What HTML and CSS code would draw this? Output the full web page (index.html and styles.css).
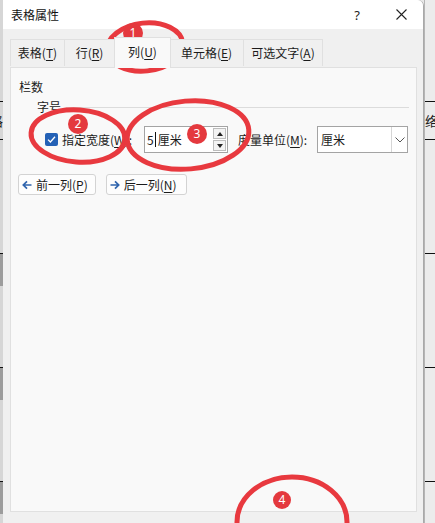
FILE: index.html
```html
<!DOCTYPE html>
<html lang="zh-CN">
<head>
<meta charset="utf-8">
<title>表格属性</title>
<link rel="stylesheet" href="styles.css">
</head>
<body>
<div class="screen">
  <div class="doc doc-left">
    <div class="doc-line l1"></div>
    <div class="doc-cell">格</div>
    <div class="doc-line"></div>
    <div class="doc-gap1"></div>
    <div class="doc-line"></div>
    <div class="doc-shade"></div>
    <div class="doc-gap2"></div>
    <div class="doc-line"></div>
    <div class="doc-shade"></div>
    <div class="doc-gap2"></div>
    <div class="doc-line"></div>
    <div class="doc-shade"></div>
  </div>

  <div class="dialog">
    <div class="titlebar">
      <span class="title">表格属性</span>
      <span class="tb-btn help">?</span>
      <span class="tb-btn close">
        <svg width="11" height="11" viewBox="0 0 11 11"><path d="M0.5 0.5L10.5 10.5M10.5 0.5L0.5 10.5" stroke="#222" stroke-width="1.1" fill="none"/></svg>
      </span>
    </div>

    <div class="tabs">
      <div class="tab t1">表格(<u>T</u>)</div>
      <div class="tab t2">行(<u>R</u>)</div>
      <div class="tab t3 active">列(<u>U</u>)</div>
      <div class="tab t4">单元格(<u>E</u>)</div>
      <div class="tab t5">可选文字(<u>A</u>)</div>
    </div>

    <div class="panel">
      <div class="group-title">栏数</div>
      <div class="subgroup">
        <span class="sub-label">字号</span>
        <span class="sep"></span>
      </div>
      <div class="row">
        <span class="checkbox">
          <svg width="9" height="9" viewBox="0 0 9 9"><path d="M1 4.6L3.4 7L8 1.8" stroke="#fff" stroke-width="1.3" fill="none"/></svg>
        </span>
        <span class="check-label">指定宽度(<u>W</u>):</span>
        <span class="spin-input">
          <span class="value">5<span class="caret"></span>厘米</span>
          <span class="spinner">
            <span class="spin-btn"><svg width="6" height="4" viewBox="0 0 6 4"><path d="M0 4L3 0L6 4Z" fill="#222"/></svg></span>
            <span class="spin-btn"><svg width="6" height="4" viewBox="0 0 6 4"><path d="M0 0L3 4L6 0Z" fill="#222"/></svg></span>
          </span>
        </span>
        <span class="unit-label">度量单位(<u>M</u>):</span>
        <span class="select">
          <span class="select-value">厘米</span>
          <span class="select-arrow">
            <svg width="10" height="6" viewBox="0 0 10 6"><path d="M0.5 0.5L5 5L9.5 0.5" stroke="#555" stroke-width="1" fill="none"/></svg>
          </span>
        </span>
      </div>
      <div class="nav-row">
        <button class="nav-btn">
          <svg width="10" height="10" viewBox="0 0 10 10"><path d="M9.5 5H1.5M5 1.3L1.3 5L5 8.7" stroke="#2f64ad" stroke-width="1.7" fill="none"/></svg>
          <span>前一列(<u>P</u>)</span>
        </button>
        <button class="nav-btn">
          <svg width="10" height="10" viewBox="0 0 10 10"><path d="M0.5 5H8.5M5 1.3L8.7 5L5 8.7" stroke="#2f64ad" stroke-width="1.7" fill="none"/></svg>
          <span>后一列(<u>N</u>)</span>
        </button>
      </div>
    </div>
  </div>

  <div class="doc doc-right">
    <div class="doc-line l1"></div>
    <div class="doc-cell">络</div>
    <div class="doc-line"></div>
    <div class="doc-gap1"></div>
    <div class="doc-line"></div>
    <div class="doc-gap3"></div>
    <div class="doc-line"></div>
    <div class="doc-gap3"></div>
    <div class="doc-line"></div>
  </div>

  <svg class="marks" width="435" height="523" viewBox="0 0 435 523">
    <g fill="none" stroke="#e8393f" stroke-width="5">
      <ellipse cx="145" cy="47" rx="38" ry="24" transform="rotate(-6 145 47)"/>
      <ellipse cx="78" cy="136" rx="47" ry="26" transform="rotate(4 78 136)"/>
      <ellipse cx="188" cy="135" rx="61" ry="34" transform="rotate(-5 188 135)"/>
      <ellipse cx="292" cy="522" rx="55" ry="45"/>
    </g>
  </svg>
  <span class="badge b1">1</span>
  <span class="badge b2">2</span>
  <span class="badge b3">3</span>
  <span class="badge b4">4</span>
</div>
</body>
</html>
```

FILE: styles.css
```css
* { box-sizing: border-box; }

html, body {
  margin: 0;
  padding: 0;
  background: #e9e9e9;
}

body {
  font-family: "Noto Sans CJK SC", "Noto Sans", sans-serif;
  font-size: 12px;
  color: #1b1b1b;
}

.screen {
  position: relative;
  width: 435px;
  height: 523px;
  overflow: hidden;
  display: flex;
}

/* document behind the dialog */
.doc {
  display: flex;
  flex-direction: column;
  overflow: hidden;
  background: #ececec;
  flex: none;
}

.doc-left {
  width: 3px;
  background: #d6d6d6;
}

.doc-right {
  width: 12px;
  border-left: 1px solid #b5b5b5;
}

.doc-line {
  height: 1px;
  background: #111;
  flex: none;
}

.doc-line.l1 { margin-top: 101px; }

.doc-cell {
  height: 37px;
  line-height: 37px;
  font-size: 13px;
  white-space: nowrap;
  flex: none;
}

.doc-left .doc-cell { margin-left: -10px; }

.doc-gap1 { height: 113px; flex: none; }
.doc-gap2 { height: 81px; flex: none; }
.doc-gap3 { height: 113px; flex: none; }

.doc-shade {
  height: 32px;
  background: #9c9c9c;
  flex: none;
}

/* dialog */
.dialog {
  width: 421px;
  flex: none;
  background: #f0f0f0;
  border-right: 1px solid #a9a9a9;
  border-top-right-radius: 6px;
  display: flex;
  flex-direction: column;
}

.titlebar {
  height: 29px;
  background: #ffffff;
  display: flex;
  align-items: center;
  border-top-right-radius: 6px;
}

.title {
  flex: 1;
  padding-left: 8px;
  font-size: 12px;
  color: #111;
}

.tb-btn {
  width: 44px;
  height: 29px;
  display: flex;
  align-items: center;
  justify-content: center;
}

.help {
  font-family: "Noto Sans", sans-serif;
  font-size: 13px;
  color: #222;
}

/* tabs */
.tabs {
  display: flex;
  align-items: flex-end;
  height: 38px;
  padding-left: 7px;
  position: relative;
  z-index: 1;
}

.tab {
  height: 27px;
  line-height: 26px;
  text-align: center;
  background: #f0f0f0;
  border: 1px solid #e0e0e0;
  border-bottom: none;
  border-left: none;
  margin-bottom: 1px;
  white-space: nowrap;
  flex: none;
}

.t1 { width: 55px; border-left: 1px solid #e0e0e0; }
.t2 { width: 50px; }
.t3 { width: 55px; }
.t4 { width: 74px; }
.t5 { width: 79px; }

.tab.active {
  width: 57px;
  height: 31px;
  line-height: 28px;
  margin: 0 -1px -1px -1px;
  background: #f9f9f9;
  border: 1px solid #e0e0e0;
  border-bottom: none;
  position: relative;
  z-index: 2;
}

.tab u, .row u, .nav-btn u { text-underline-offset: 2px; }

/* panel */
.panel {
  margin: 0 6px 0 7px;
  height: 445px;
  background: #f9f9f9;
  border: 1px solid #e0e0e0;
  padding: 11px 7px 0 8px;
  flex: none;
}

.group-title {
  line-height: 16px;
}

.subgroup {
  display: flex;
  align-items: center;
  margin-top: 3px;
  margin-left: 18px;
  gap: 5px;
  height: 16px;
}

.sep {
  flex: 1;
  height: 1px;
  background: #dcdcdc;
  margin-top: 2px;
}

.row {
  display: flex;
  align-items: center;
  margin-top: 12px;
  height: 27px;
}

.checkbox {
  width: 13px;
  height: 13px;
  margin-left: 26px;
  border-radius: 2px;
  background: #2461b6;
  display: flex;
  align-items: center;
  justify-content: center;
  flex: none;
}

.check-label {
  margin-left: 4px;
  width: 82px;
  white-space: nowrap;
}

.spin-input {
  width: 84px;
  height: 27px;
  background: #fff;
  border: 1px solid #a4a4a4;
  display: flex;
  align-items: center;
  padding-left: 2px;
  flex: none;
}

.value {
  flex: 1;
  display: flex;
  align-items: center;
  white-space: nowrap;
}

.caret {
  width: 1px;
  height: 15px;
  background: #111;
  margin: 0 2px 0 1px;
}

.spinner {
  display: flex;
  flex-direction: column;
  gap: 1px;
  margin-right: 1px;
}

.spin-btn {
  width: 13px;
  height: 11px;
  border: 1px solid #bdbdbd;
  background: #f3f3f3;
  display: flex;
  align-items: center;
  justify-content: center;
}

.unit-label {
  margin-left: 10px;
  width: 79px;
  white-space: nowrap;
}

.select {
  width: 91px;
  height: 27px;
  background: #fff;
  border: 1px solid #a4a4a4;
  display: flex;
  align-items: stretch;
  flex: none;
}

.select-value {
  flex: 1;
  padding-left: 3px;
  display: flex;
  align-items: center;
}

.select-arrow {
  width: 16px;
  border-left: 1px solid #d6d6d6;
  display: flex;
  align-items: center;
  justify-content: center;
}

.nav-row {
  display: flex;
  gap: 10px;
  margin-top: 21px;
  margin-left: -1px;
}

.nav-btn {
  height: 21px;
  display: flex;
  align-items: center;
  gap: 4px;
  padding: 0 7px 0 3px;
  font: inherit;
  color: #1b1b1b;
  background: #fdfdfd;
  border: 1px solid #d3d3d3;
  border-radius: 3px;
}

.nav-btn + .nav-btn { padding-right: 9px; }

/* annotations */
.marks {
  position: absolute;
  left: 0;
  top: 0;
  pointer-events: none;
}

.badge {
  position: absolute;
  width: 20px;
  height: 20px;
  border-radius: 50%;
  background: #e4393e;
  color: #fff;
  font-family: "Noto Sans", sans-serif;
  font-size: 12px;
  line-height: 20px;
  text-align: center;
}

.b1 { left: 123px; top: 23px; }
.b2 { left: 68px; top: 114px; }
.b3 { left: 187px; top: 124px; }
.b4 { left: 273px; top: 491px; width: 18px; height: 18px; line-height: 18px; }
```
